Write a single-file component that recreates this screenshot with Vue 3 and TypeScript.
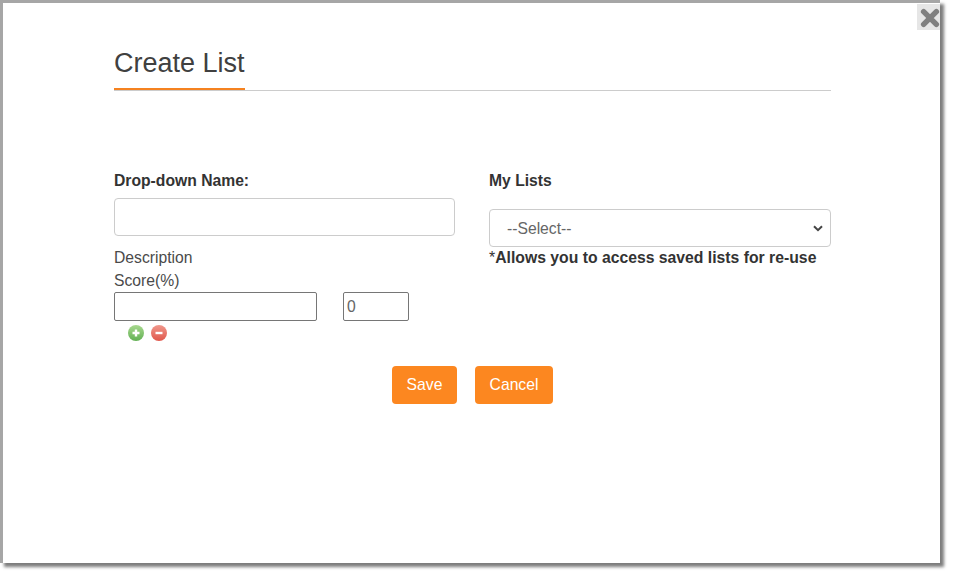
<script setup lang="ts">
import { ref } from 'vue'
const name = ref('')
const desc = ref('')
const score = ref('0')
</script>

<template>
  <div class="page">
    <div class="modal">
      <button class="close" aria-label="Close">
        <svg width="22" height="22" viewBox="0 0 22 22"><path d="M4 4 L18 18 M18 4 L4 18" stroke="#808080" stroke-width="6" stroke-linecap="round" fill="none"/></svg>
      </button>
      <div class="content">
        <div class="head"><h1>Create List</h1></div>
        <div class="cols">
          <div class="col left">
            <label class="lab">Drop-down Name:</label>
            <input v-model="name" class="ctl" type="text" />
            <div class="txt first">Description</div>
            <div class="txt">Score(%)</div>
            <div class="row">
              <input v-model="desc" class="plain wide" type="text" />
              <input v-model="score" class="plain small" type="text" />
            </div>
            <div class="icons">
              <svg width="18" height="18" viewBox="0 0 18 18">
                <defs><linearGradient id="g" x1="0" y1="0" x2="0" y2="1"><stop offset="0" stop-color="#a8d88e"/><stop offset="1" stop-color="#62b054"/></linearGradient></defs>
                <circle cx="9" cy="9" r="8" fill="url(#g)"/>
                <path d="M5.5 9H12.5M9 5.5V12.5" stroke="#fff" stroke-width="2.4"/>
              </svg>
              <svg width="18" height="18" viewBox="0 0 18 18">
                <defs><linearGradient id="r" x1="0" y1="0" x2="0" y2="1"><stop offset="0" stop-color="#f0988c"/><stop offset="1" stop-color="#e0574c"/></linearGradient></defs>
                <circle cx="9" cy="9" r="8" fill="url(#r)"/>
                <path d="M5.5 9H12.5" stroke="#fff" stroke-width="2.4"/>
              </svg>
            </div>
          </div>
          <div class="col right">
            <label class="lab">My Lists</label>
            <div class="selwrap">
              <select class="ctl sel"><option>--Select--</option></select>
              <svg class="chev" width="10" height="7" viewBox="0 0 10 7"><path d="M1 1.2 L5 5.2 L9 1.2" stroke="#444" stroke-width="2" fill="none"/></svg>
            </div>
            <div class="note"><span class="star">*</span><b>Allows you to access saved lists for re-use</b></div>
          </div>
        </div>
        <div class="btns">
          <button class="btn save">Save</button>
          <button class="btn cancel">Cancel</button>
        </div>
      </div>
    </div>
  </div>
</template>

<style>
html, body { margin: 0; background: #fff; }
</style>

<style scoped>
.page { height: 576px; overflow: hidden; }
.modal {
  box-sizing: border-box;
  position: relative;
  width: 940px;
  height: 563px;
  border-top: 3px solid #a6a6a6;
  border-left: 3px solid #a6a6a6;
  background: #fff;
  box-shadow: 4px 4px 3px #7d7d7d;
  font-family: "Liberation Sans", Arial, sans-serif;
  color: #333;
}
.close {
  position: absolute;
  top: 1px;
  right: 0;
  width: 23px;
  height: 26px;
  padding: 2px 0 0 3px;
  border: 0;
  background: #e6e6e6;
  display: flex;
  align-items: center;
  justify-content: center;
}
.content { width: 717px; margin-left: 111px; padding-top: 39px; }
.head { border-bottom: 1px solid #ccc; height: 48px; }
h1 {
  display: inline-block;
  margin: 0;
  height: 46px;
  font-size: 27px;
  font-weight: 400;
  line-height: 43px;
  color: #404040;
  border-bottom: 2px solid #f58220;
}
.cols { display: flex; margin-top: 79px; }
.left { width: 341px; margin-right: 34px; }
.right { width: 342px; }
.lab { display: block; font-size: 15.7px; font-weight: 700; line-height: 22px; height: 20px; }
.ctl {
  box-sizing: border-box;
  display: block;
  width: 100%;
  height: 38px;
  margin-top: 8px;
  border: 1px solid #ccc;
  border-radius: 4px;
  background: #fff;
  font: 15.7px "Liberation Sans", Arial, sans-serif;
  color: #666;
}
.selwrap { position: relative; margin-top: 19px; }
.sel { margin-top: 0; padding-left: 17px; appearance: none; }
.chev { position: absolute; right: 8px; top: 16px; }
.txt { font-size: 15.7px; line-height: 23px; color: #4a4a4a; }
.first { margin-top: 10px; }
.row { display: flex; gap: 26px; }
.plain {
  box-sizing: border-box;
  height: 29px;
  border: 1px solid #767676;
  border-radius: 2px;
  padding: 0 3px;
  font: 15.7px "Liberation Sans", Arial, sans-serif;
  color: #666;
}
.wide { width: 203px; }
.small { width: 66px; }
.icons { display: flex; gap: 5px; padding: 3px 0 0 13px; }
.note { font-size: 15.75px; line-height: 22px; height: 20px; }
.star { font-weight: 400; }
.btns { display: flex; justify-content: center; gap: 18px; margin-top: 24px; }
.btn {
  box-sizing: border-box;
  height: 38px;
  padding: 0;
  border: 0;
  border-radius: 4px;
  background: #fc8720;
  color: #fff;
  font: 15.7px "Liberation Sans", Arial, sans-serif;
}
.save { width: 65px; }
.cancel { width: 78px; }
</style>
